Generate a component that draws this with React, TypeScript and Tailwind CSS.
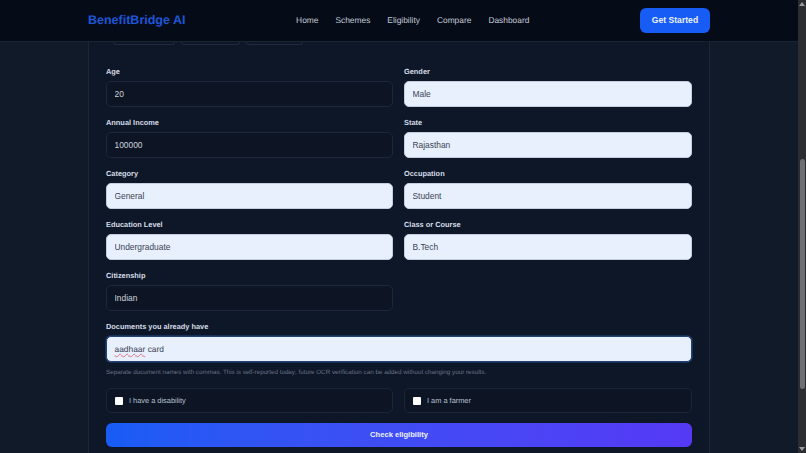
const navLinks = ['Home', 'Schemes', 'Eligibility', 'Compare', 'Dashboard'];

const fields = [
  { label: 'Age', value: '20', filled: false },
  { label: 'Gender', value: 'Male', filled: true },
  { label: 'Annual Income', value: '100000', filled: false },
  { label: 'State', value: 'Rajasthan', filled: true },
  { label: 'Category', value: 'General', filled: true },
  { label: 'Occupation', value: 'Student', filled: true },
  { label: 'Education Level', value: 'Undergraduate', filled: true },
  { label: 'Class or Course', value: 'B.Tech', filled: true },
  { label: 'Citizenship', value: 'Indian', filled: false },
];

function Field({ label, value, filled }: { label: string; value: string; filled: boolean }) {
  return (
    <div className="flex flex-col gap-[3px]">
      <label className="text-[7.4px] leading-[13px] font-bold text-[#d5dbe6]">{label}</label>
      <input
        readOnly
        value={value}
        className={
          filled
            ? 'h-[26px] w-full rounded-[5px] border border-[#c3cddd] bg-[#e8f0fe] px-[7.5px] text-[8.4px] text-[#3b4250] outline-none'
            : 'h-[26px] w-full rounded-[5px] border border-[#1d2739] bg-[#0d1525] px-[7.5px] text-[8.4px] text-[#cdd4df] outline-none'
        }
      />
    </div>
  );
}

function CheckRow({ label }: { label: string }) {
  return (
    <label className="flex h-[25px] items-center gap-[6px] rounded-[5px] border border-[#1b2536] bg-[#0d1525] px-[8px]">
      <span className="h-[8px] w-[8px] rounded-[1px] bg-white" />
      <span className="text-[7.4px] text-[#b9c1cf]">{label}</span>
    </label>
  );
}

export default function App() {
  return (
    <div className="flex h-[453px] w-[806px] overflow-hidden bg-[#111a29] font-['Liberation_Sans',sans-serif] [text-rendering:geometricPrecision]">
      <div className="flex min-w-0 flex-1 flex-col">
        <nav className="relative z-10 flex h-[42px] shrink-0 items-center justify-between border-b border-[#1a2333] bg-[#060b18] px-[88px]">
          <span className="text-[12.5px] font-bold text-[#1d56d8]">BenefitBridge AI</span>
          <div className="flex items-center gap-[17px]">
            {navLinks.map((l) => (
              <a key={l} className="text-[8.4px] text-[#c3cad6]">
                {l}
              </a>
            ))}
          </div>
          <button className="h-[25px] w-[70px] rounded-[6px] bg-[#175cf5] text-[8.6px] font-bold text-[#eef2fa]">
            Get Started
          </button>
        </nav>

        <main className="mx-[88px] flex flex-1 flex-col border-x border-[#1c2636] bg-[#0e1728] px-[17px]">
          <div className="flex h-[3px] gap-[6px] pl-[7px]">
            <div className="h-[3px] w-[62px] rounded-b-[4px] border-x border-b border-[#1f2a3c]" />
            <div className="h-[3px] w-[59px] rounded-b-[4px] border-x border-b border-[#1f2a3c]" />
            <div className="h-[3px] w-[57px] rounded-b-[4px] border-x border-b border-[#1f2a3c]" />
          </div>

          <div className="mt-[20px] grid grid-cols-[287px_1fr] gap-x-[11px] gap-y-[9px]">
            {fields.map((f) => (
              <Field key={f.label} {...f} />
            ))}
          </div>

          <div className="mt-[9px] flex flex-col gap-[3px]">
            <label className="text-[7.4px] leading-[13px] font-bold text-[#d5dbe6]">Documents you already have</label>
            <div className="flex h-[26px] items-center rounded-[5px] border border-[#24426f] bg-[#e8f0fe] px-[7.5px] text-[8.4px] text-[#3b4250] ring-1 ring-[#16305c]">
              <span className="underline decoration-wavy decoration-[#d9434e]/70 decoration-[0.5px] underline-offset-1">aadhaar</span>
              <span className="ml-[2.4px]">card</span>
            </div>
          </div>

          <p className="mt-[6px] text-[6.28px] leading-[9px] text-[#687386]">
            Separate document names with commas. This is self-reported today; future OCR verification can be added without changing your results.
          </p>

          <div className="mt-[11px] grid grid-cols-[287px_1fr] gap-x-[11px]">
            <CheckRow label="I have a disability" />
            <CheckRow label="I am a farmer" />
          </div>

          <button className="mt-[10px] h-[24px] w-full shrink-0 rounded-[6px] bg-gradient-to-r from-[#175cf5] to-[#5539f5] text-[7.6px] font-bold text-[#eef2fa]">
            Check eligibility
          </button>
        </main>
      </div>

      <aside className="flex w-[8px] shrink-0 flex-col items-center justify-between bg-[#2b2d31] py-[2px]">
        <svg width="6" height="4" viewBox="0 0 6 4"><path d="M3 0 6 4H0z" fill="#9a9ca0" /></svg>
        <div className="mb-[58px] mt-[153px] w-[5px] flex-1 rounded-full bg-[#6d6f73]" />
        <svg width="6" height="4" viewBox="0 0 6 4"><path d="M0 0h6L3 4z" fill="#9a9ca0" /></svg>
      </aside>
    </div>
  );
}
